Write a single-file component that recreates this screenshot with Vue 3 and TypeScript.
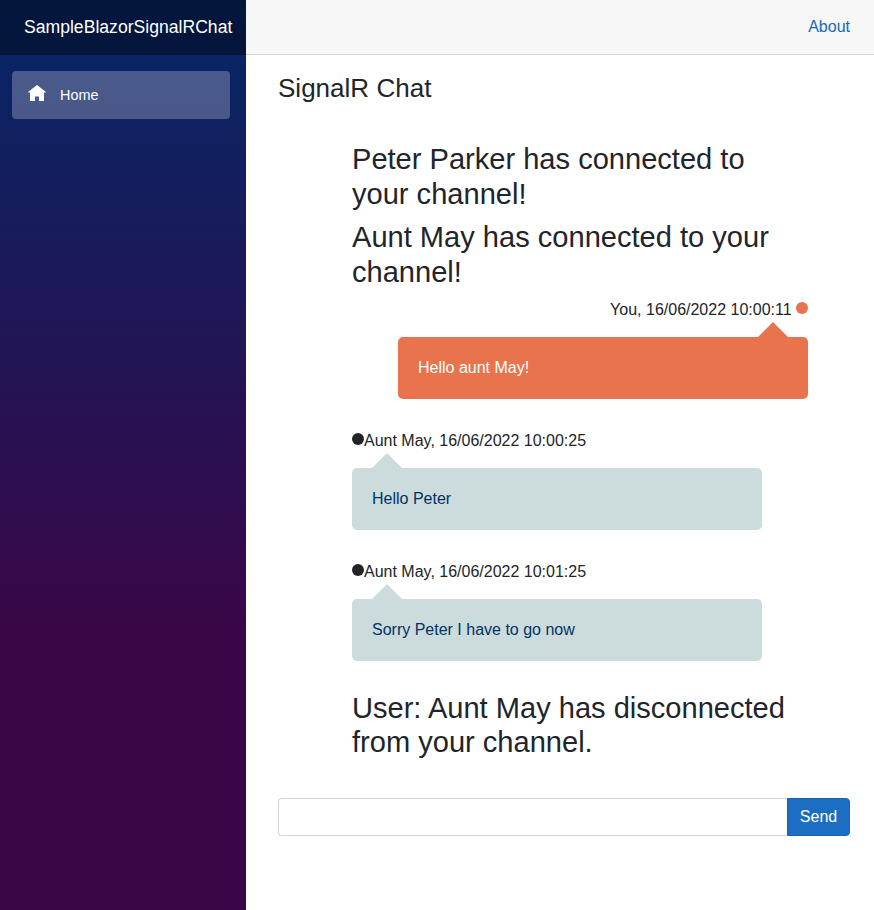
<script setup lang="ts">
import { ref } from 'vue'

interface ChatEntry {
  kind: 'notice' | 'mine' | 'other'
  text: string
  author?: string
  time?: string
}

const draft = ref('')
const entries = ref<ChatEntry[]>([
  { kind: 'notice', text: 'Peter Parker has connected to your channel!' },
  { kind: 'notice', text: 'Aunt May has connected to your channel!' },
  { kind: 'mine', author: 'You', time: '16/06/2022 10:00:11', text: 'Hello aunt May!' },
  { kind: 'other', author: 'Aunt May', time: '16/06/2022 10:00:25', text: 'Hello Peter' },
  { kind: 'other', author: 'Aunt May', time: '16/06/2022 10:01:25', text: 'Sorry Peter I have to go now' },
  { kind: 'notice', text: 'User: Aunt May has disconnected from your channel.' },
])

function send(): void {
  const text = draft.value.trim()
  if (!text) return
  entries.value.push({ kind: 'mine', author: 'You', time: new Date().toLocaleString('en-GB').replace(',', ''), text })
  draft.value = ''
}
</script>

<template>
  <div class="page">
    <aside class="sidebar">
      <div class="brand-row"><a class="brand" href="#">SampleBlazorSignalRChat</a></div>
      <nav class="nav">
        <a class="nav-link" href="#">
          <svg class="home-icon" viewBox="0 0 18 16" aria-hidden="true">
            <path d="M9 0 0 7v.6h2V16h5v-4.5h4V16h5V7.6h2V7z" fill="#fff" />
          </svg>
          <span>Home</span>
        </a>
      </nav>
    </aside>
    <main class="main">
      <header class="top-row"><a href="#">About</a></header>
      <article class="content">
        <h3 class="title">SignalR Chat</h3>
        <section class="history">
          <template v-for="(entry, i) in entries" :key="i">
            <h2 v-if="entry.kind === 'notice'" class="notice">{{ entry.text }}</h2>
            <div v-else class="message-row" :class="entry.kind">
              <div class="meta">
                <i v-if="entry.kind === 'other'" class="dot"></i>
                <span>{{ entry.author }}, {{ entry.time }}</span>
                <i v-if="entry.kind === 'mine'" class="dot"></i>
              </div>
              <div class="bubble">{{ entry.text }}</div>
            </div>
          </template>
        </section>
        <form class="composer" @submit.prevent="send">
          <input v-model="draft" class="field" type="text" aria-label="Message" />
          <button class="send" type="submit">Send</button>
        </form>
      </article>
    </main>
  </div>
</template>

<style>
body {
  background: #fff;
}
</style>

<style scoped>
.page,
.page * {
  box-sizing: border-box;
}
.page {
  display: flex;
  min-height: 910px;
  height: 100vh;
  font: 16px/24px "Liberation Sans", Arial, sans-serif;
  color: #212529;
}
a {
  text-decoration: none;
}
.sidebar {
  width: 246px;
  flex: none;
  background: linear-gradient(180deg, rgb(5, 39, 103) 0%, #3a0647 70%);
}
.brand-row {
  height: 55px;
  padding: 0 0 1px 24px;
  display: flex;
  align-items: center;
  background: rgba(0, 0, 0, 0.4);
}
.brand {
  color: #fff;
  font-size: 17.6px;
  white-space: nowrap;
}
.nav {
  padding: 16px 16px 0 12px;
}
.nav-link {
  display: flex;
  align-items: center;
  height: 48px;
  padding-left: 16px;
  border-radius: 4px;
  background: rgba(255, 255, 255, 0.25);
  color: #fff;
  font-size: 14.4px;
}
.home-icon {
  width: 18px;
  height: 16px;
  margin: 0 14px 4px 0;
}
.main {
  flex: 1;
  min-width: 0;
}
.top-row {
  height: 55px;
  padding-right: 24px;
  display: flex;
  align-items: center;
  justify-content: flex-end;
  background: #f7f7f7;
  border-bottom: 1px solid #d6d5d5;
}
.top-row a {
  color: #1467b8;
}
.content {
  padding: 18px 24px 0 32px;
}
.title {
  margin: 0;
  font-size: 26.04px;
  line-height: 31px;
  font-weight: 400;
}
.history {
  padding: 38.1px 42px 29.4px 74px;
}
.notice {
  margin: 0 0 8px;
  font-size: 29.07px;
  line-height: 34.88px;
  font-weight: 400;
}
.message-row {
  display: flex;
  flex-direction: column;
  align-items: flex-start;
  margin-bottom: 30px;
}
.message-row.mine {
  align-items: flex-end;
}
.meta {
  display: flex;
  align-items: center;
  height: 24px;
  margin-bottom: 15px;
}
.dot {
  width: 12px;
  height: 12px;
  margin-bottom: 4px;
  border-radius: 50%;
  background: #212529;
}
.mine .dot {
  margin-left: 4.4px;
  background: #e8734c;
}
.bubble {
  position: relative;
  width: 410px;
  padding: 18px 20px;
  line-height: 26px;
  border-radius: 5px;
  background: #ccdbdc;
  color: #003366;
}
.mine .bubble {
  background: #e8734c;
  color: #fff;
}
.bubble::before {
  content: "";
  position: absolute;
  bottom: 100%;
  left: 20px;
  border: 15px solid transparent;
  border-top: 0;
  border-bottom-color: #ccdbdc;
}
.mine .bubble::before {
  left: auto;
  right: 20px;
  border-bottom-color: #e8734c;
}
.composer {
  display: flex;
  height: 38px;
}
.field {
  flex: 1;
  min-width: 0;
  padding: 6px 12px;
  font: inherit;
  border: 1px solid #ced4da;
  border-right: 0;
  border-radius: 4px 0 0 4px;
  outline: 0;
}
.send {
  width: 63px;
  padding: 0;
  font: inherit;
  color: #fff;
  background: #1b6ec2;
  border: 1px solid #1861ac;
  border-radius: 0 4px 4px 0;
}
</style>
